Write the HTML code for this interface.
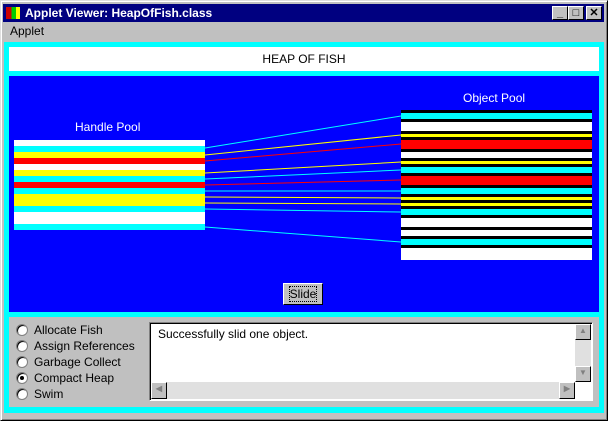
<!DOCTYPE html>
<html><head><style>
*{margin:0;padding:0;box-sizing:border-box}
body{width:608px;height:421px;background:#c0c0c0;position:relative;overflow:hidden;font-family:"Liberation Sans",sans-serif}
.abs{position:absolute}
.win{left:0;top:0;width:608px;height:421px;border:1px solid #dfdfdf;border-right-color:#000;border-bottom-color:#000;box-shadow:inset 1px 1px #fff,inset -1px -1px #808080}
.title{left:3px;top:4px;width:601px;height:18px;background:#000080;color:#fff;font-weight:bold;font-size:12px;line-height:18px;padding-left:22px}
.tb{top:6px;width:16px;height:14px;background:#c0c0c0;border:1px solid #fff;border-right-color:#000;border-bottom-color:#000;font-size:11px;line-height:12px;text-align:center;color:#000;font-weight:bold}
.stripe{position:absolute;left:0;width:100%}
.lbl{color:#fff;font-size:12px}
.radio{width:12px;height:12px;border-radius:50%;background:#fff;border:1px solid #808080;box-shadow:inset 1px 1px #000}
.rt{font-size:12px;color:#000}
</style></head><body>
<div class="abs win"></div>
<div class="abs title">Applet Viewer: HeapOfFish.class</div>
<div class="abs" style="left:6px;top:7px;width:14px;height:12px;background:linear-gradient(90deg,#c00 0 40%,#0c0 40% 70%,#ff0 70%)"></div>
<div class="abs tb" style="left:552px">_</div>
<div class="abs tb" style="left:568px">□</div>
<div class="abs tb" style="left:586px">✕</div>
<div class="abs" style="left:10px;top:24px;font-size:12px">Applet</div>
<div class="abs" style="left:4px;top:42px;width:600px;height:371px;background:#00ffff"></div>
<div class="abs" style="left:9px;top:47px;width:590px;height:24px;background:#fff;font-size:12px;text-align:center;line-height:24px">HEAP OF FISH</div>
<div class="abs" style="left:9px;top:76px;width:590px;height:236px;background:#0000ff"></div>
<div class="abs lbl" style="left:75px;top:120px">Handle Pool</div>
<div class="abs lbl" style="left:463px;top:91px">Object Pool</div>
<div class="abs" style="left:14px;top:140px;width:191px;height:90px">
<div class="stripe" style="top:0;height:6px;background:#fff"></div>
<div class="stripe" style="top:6px;height:6px;background:#0ff"></div>
<div class="stripe" style="top:12px;height:6px;background:#ff0"></div>
<div class="stripe" style="top:18px;height:6px;background:#f00"></div>
<div class="stripe" style="top:24px;height:6px;background:#fff"></div>
<div class="stripe" style="top:30px;height:6px;background:#ff0"></div>
<div class="stripe" style="top:36px;height:6px;background:#0ff"></div>
<div class="stripe" style="top:42px;height:6px;background:#f00"></div>
<div class="stripe" style="top:48px;height:6px;background:#0ff"></div>
<div class="stripe" style="top:54px;height:12px;background:#ff0"></div>
<div class="stripe" style="top:66px;height:6px;background:#0ff"></div>
<div class="stripe" style="top:72px;height:12px;background:#fff"></div>
<div class="stripe" style="top:84px;height:6px;background:#0ff"></div>
</div>
<div class="abs" style="left:401px;top:110px;width:191px;height:150px;background:#000">
<div class="stripe" style="top:3px;height:6px;background:#0ff"></div>
<div class="stripe" style="top:12px;height:9px;background:#fff"></div>
<div class="stripe" style="top:24px;height:3px;background:#ff0"></div>
<div class="stripe" style="top:30px;height:9px;background:#f00"></div>
<div class="stripe" style="top:42px;height:6px;background:#fff"></div>
<div class="stripe" style="top:51px;height:3px;background:#ff0"></div>
<div class="stripe" style="top:57px;height:6px;background:#0ff"></div>
<div class="stripe" style="top:66px;height:9px;background:#f00"></div>
<div class="stripe" style="top:78px;height:6px;background:#0ff"></div>
<div class="stripe" style="top:87px;height:3px;background:#ff0"></div>
<div class="stripe" style="top:93px;height:3px;background:#ff0"></div>
<div class="stripe" style="top:99px;height:6px;background:#0ff"></div>
<div class="stripe" style="top:108px;height:9px;background:#fff"></div>
<div class="stripe" style="top:120px;height:6px;background:#fff"></div>
<div class="stripe" style="top:129px;height:6px;background:#0ff"></div>
<div class="stripe" style="top:138px;height:12px;background:#fff"></div>
</div>
<svg class="abs" style="left:0;top:0" width="608" height="421">
<g stroke-width="1">
<line x1="205" y1="148" x2="401" y2="116" stroke="#0ff"/>
<line x1="205" y1="155" x2="401" y2="135" stroke="#ff0"/>
<line x1="205" y1="161" x2="401" y2="144" stroke="#f00"/>
<line x1="205" y1="173" x2="401" y2="162" stroke="#ff0"/>
<line x1="205" y1="179" x2="401" y2="170" stroke="#0ff"/>
<line x1="205" y1="185" x2="401" y2="180" stroke="#f00"/>
<line x1="205" y1="191" x2="401" y2="191" stroke="#0ff"/>
<line x1="205" y1="197" x2="401" y2="198" stroke="#ff0"/>
<line x1="205" y1="203" x2="401" y2="204" stroke="#ff0"/>
<line x1="205" y1="209" x2="401" y2="212" stroke="#0ff"/>
<line x1="205" y1="227" x2="401" y2="242" stroke="#0ff"/>
</g></svg>
<div class="abs" style="left:283px;top:283px;width:40px;height:22px;background:#c0c0c0;border:1px solid #fff;border-right-color:#000;border-bottom-color:#000;font-size:12px;text-align:center;line-height:20px"><span style="outline:1px dotted #000">Slide</span></div>
<div class="abs" style="left:9px;top:317px;width:590px;height:90px;background:#c0c0c0"></div>
<div class="abs radio" style="left:16px;top:324px"></div><div class="abs rt" style="left:34px;top:323px">Allocate Fish</div>
<div class="abs radio" style="left:16px;top:340px"></div><div class="abs rt" style="left:34px;top:339px">Assign References</div>
<div class="abs radio" style="left:16px;top:356px"></div><div class="abs rt" style="left:34px;top:355px">Garbage Collect</div>
<div class="abs radio" style="left:16px;top:372px"><div style="position:absolute;left:3px;top:3px;width:4px;height:4px;border-radius:50%;background:#000"></div></div><div class="abs rt" style="left:34px;top:371px">Compact Heap</div>
<div class="abs radio" style="left:16px;top:388px"></div><div class="abs rt" style="left:34px;top:387px">Swim</div>
<div class="abs" style="left:149px;top:322px;width:444px;height:79px;background:#fff;border:1px solid #808080;border-right-color:#fff;border-bottom-color:#fff;box-shadow:inset 1px 1px #000"></div>
<div class="abs" style="left:158px;top:327px;font-size:12px">Successfully slid one object.</div>
<div class="abs" style="left:575px;top:324px;width:16px;height:58px;background:#e0e0e0"></div>
<div class="abs tb" style="left:575px;top:324px;height:16px;font-size:8px;color:#808080">▲</div>
<div class="abs tb" style="left:575px;top:366px;height:16px;font-size:8px;color:#808080">▼</div>
<div class="abs" style="left:151px;top:382px;width:424px;height:17px;background:#e0e0e0"></div>
<div class="abs tb" style="left:151px;top:382px;height:17px;font-size:8px;color:#808080">◀</div>
<div class="abs tb" style="left:559px;top:382px;height:17px;font-size:8px;color:#808080">▶</div>
</body></html>
